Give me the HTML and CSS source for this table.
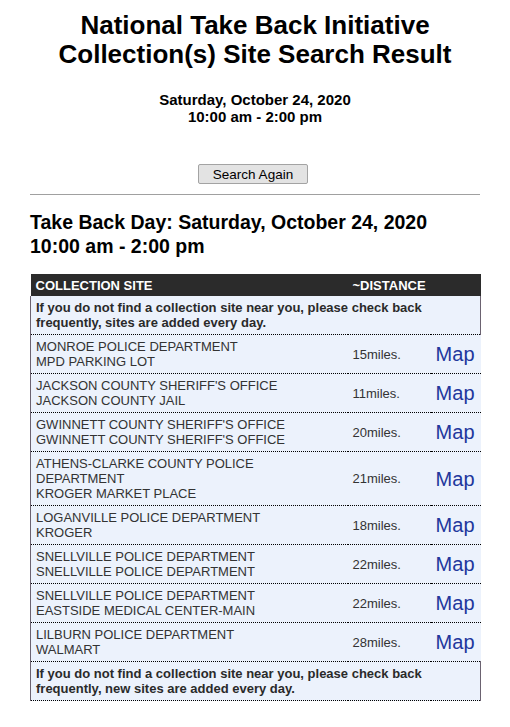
FILE: index.html
```html
<!DOCTYPE html>
<html>
<head>
<meta charset="utf-8">
<title>Collection Site Search Result</title>
<link rel="stylesheet" href="styles.css">
</head>
<body>
<div class="page">
  <h1 class="title">National Take Back Initiative<br>Collection(s) Site Search Result</h1>
  <p class="date">Saturday, October 24, 2020<br>10:00 am - 2:00 pm</p>
  <div class="actions"><button class="btn" type="button">Search Again</button></div>
  <hr class="rule">
  <h2 class="day">Take Back Day: Saturday, October 24, 2020<br>10:00 am - 2:00 pm</h2>
  <table class="sites">
    <colgroup><col class="c-site"><col class="c-dist"><col class="c-map"></colgroup>
    <thead>
      <tr><th>COLLECTION SITE</th><th colspan="2">~DISTANCE</th></tr>
    </thead>
    <tbody>
      <tr class="notice"><td colspan="3">If you do not find a collection site near you, please check back frequently, sites are added every day.</td></tr>
      <tr><td class="site">MONROE POLICE DEPARTMENT<br>MPD PARKING LOT</td><td class="dist">15miles.</td><td class="map"><a href="#">Map</a></td></tr>
      <tr><td class="site">JACKSON COUNTY SHERIFF'S OFFICE<br>JACKSON COUNTY JAIL</td><td class="dist">11miles.</td><td class="map"><a href="#">Map</a></td></tr>
      <tr><td class="site">GWINNETT COUNTY SHERIFF'S OFFICE<br>GWINNETT COUNTY SHERIFF'S OFFICE</td><td class="dist">20miles.</td><td class="map"><a href="#">Map</a></td></tr>
      <tr><td class="site">ATHENS-CLARKE COUNTY POLICE<br>DEPARTMENT<br>KROGER MARKET PLACE</td><td class="dist">21miles.</td><td class="map"><a href="#">Map</a></td></tr>
      <tr><td class="site">LOGANVILLE POLICE DEPARTMENT<br>KROGER</td><td class="dist">18miles.</td><td class="map"><a href="#">Map</a></td></tr>
      <tr><td class="site">SNELLVILLE POLICE DEPARTMENT<br>SNELLVILLE POLICE DEPARTMENT</td><td class="dist">22miles.</td><td class="map"><a href="#">Map</a></td></tr>
      <tr><td class="site">SNELLVILLE POLICE DEPARTMENT<br>EASTSIDE MEDICAL CENTER-MAIN</td><td class="dist">22miles.</td><td class="map"><a href="#">Map</a></td></tr>
      <tr><td class="site">LILBURN POLICE DEPARTMENT<br>WALMART</td><td class="dist">28miles.</td><td class="map"><a href="#">Map</a></td></tr>
      <tr class="notice"><td colspan="3">If you do not find a collection site near you, please check back frequently, new sites are added every day.</td></tr>
    </tbody>
  </table>
</div>
</body>
</html>
```

FILE: styles.css
```css
html, body {
  margin: 0;
  padding: 0;
  background: #ffffff;
}
body {
  font-family: Arial, "Liberation Sans", sans-serif;
  color: #000;
}
.page {
  width: 450px;
  margin: 0 auto;
  padding-bottom: 20px;
}
.title {
  margin: 11px 0 0;
  font-size: 26px;
  line-height: 29px;
  font-weight: bold;
  text-align: center;
}
.date {
  margin: 22px 0 0;
  font-size: 15px;
  line-height: 17px;
  font-weight: bold;
  text-align: center;
}
.actions {
  margin-top: 39px;
  display: flex;
  justify-content: center;
  padding-right: 4px;
}
.btn {
  box-sizing: border-box;
  width: 110px;
  height: 20px;
  padding: 0;
  font-family: Arial, "Liberation Sans", sans-serif;
  font-size: 13.5px;
  color: #000;
  background: #e3e3e3;
  border: 1px solid #a3a3a3;
  border-radius: 2px;
}
.rule {
  margin: 10px 0 0;
  border: 0;
  border-top: 1px solid #a0a0a0;
  height: 0;
}
.day {
  margin: 15px 0 0;
  font-size: 19.5px;
  line-height: 24px;
  font-weight: bold;
}
.sites {
  margin-top: 16px;
  width: 450px;
  border-collapse: collapse;
  table-layout: fixed;
  font-size: 13px;
  line-height: 15px;
}
.c-site { width: 317px; }
.c-dist { width: 83px; }
.c-map { width: 50px; }
.sites th {
  background: #2b2b2b;
  color: #ffffff;
  text-align: left;
  font-weight: bold;
  padding: 4px 5px 3px;
  line-height: 15px;
}
.sites td {
  background: #ecf2fc;
  border-bottom: 1px dotted #000;
  padding: 4px 5px;
  vertical-align: middle;
  color: #333;
}
.sites td:first-child {
  border-left: 1px solid #6b6270;
}
.notice td {
  font-weight: bold;
  color: #2a2a2a;
  border-right: 1px solid #6b6270;
}
.dist {
  padding-left: 6px;
}
.map {
  text-align: right;
  padding-right: 6px !important;
}
.map a {
  font-size: 20px;
  line-height: 22px;
  color: #22379c;
  text-decoration: none;
}
```
